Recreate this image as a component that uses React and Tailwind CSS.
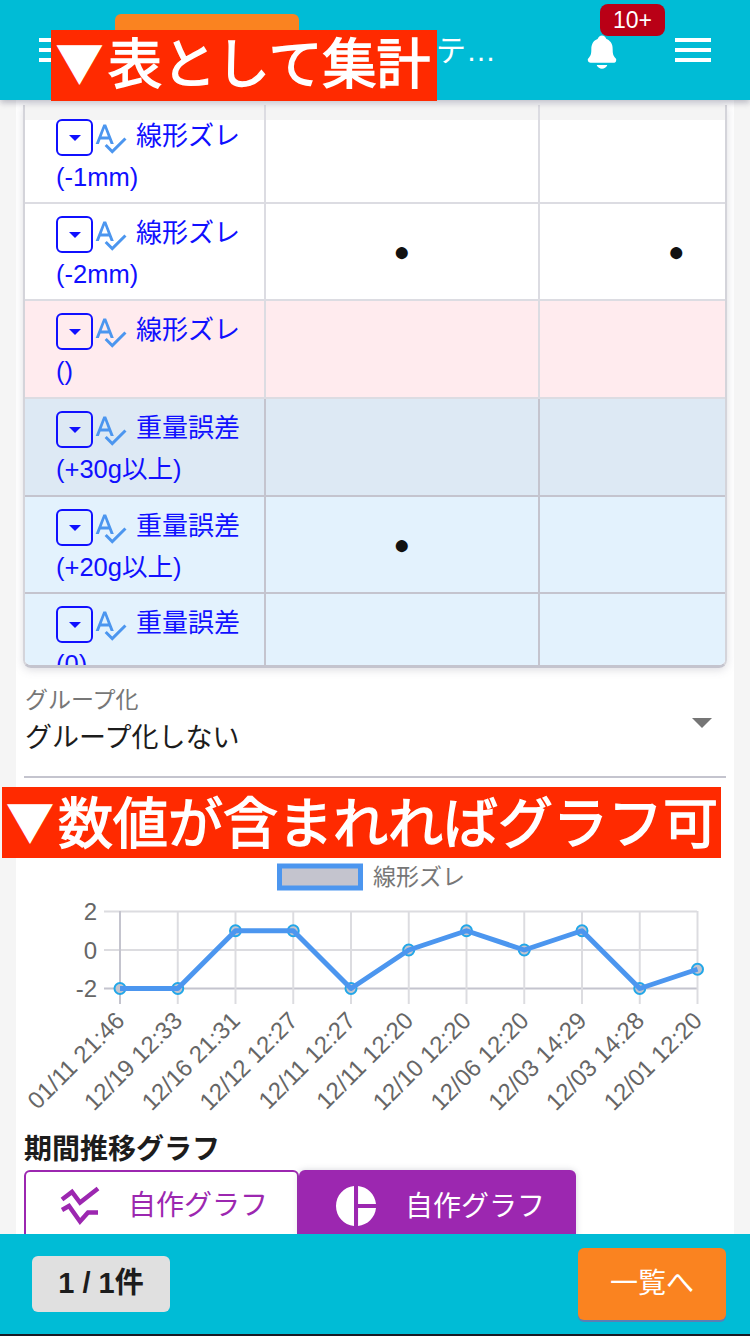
import React from 'react';
import { IoNotifications } from 'react-icons/io5';

const FONT = { fontFamily: '"Liberation Sans", "Noto Sans CJK JP", sans-serif' };
const BANNER_FONT = { fontFamily: '"Noto Sans CJK JP", sans-serif' };

const rows = [
  { name: '線形ズレ', sub: '(-1mm)', bg: 'bg-[linear-gradient(#f4f4f4_15px,#ffffff_15px)]', line: 'border-[#dcdce2]', h: 'h-[99px]', top: true },
  { name: '線形ズレ', sub: '(-2mm)', bg: 'bg-white', line: 'border-[#dcdce2]', h: 'h-[97px]', a: true, b: true },
  { name: '線形ズレ', sub: '()', bg: 'bg-[#ffebee]', line: 'border-[#dcdce2]', h: 'h-[98px]' },
  { name: '重量誤差', sub: '(+30g以上)', bg: 'bg-[#dde9f4]', line: 'border-[#c4c4ce]', h: 'h-[98px]' },
  { name: '重量誤差', sub: '(+20g以上)', bg: 'bg-[#e3f2fd]', line: 'border-[#c4c4ce]', h: 'h-[97px]', a: true },
  { name: '重量誤差', sub: '(0)', bg: 'bg-[#e3f2fd]', line: 'border-[#c4c4ce]', h: 'h-[98px]' },
];

const points = [-2, -2, 1, 1, -2, 0, 1, 0, 1, -2, -1];
const dates = ['01/11 21:46', '12/19 12:33', '12/16 21:31', '12/12 12:27', '12/11 12:27', '12/11 12:20', '12/10 12:20', '12/06 12:20', '12/03 14:29', '12/03 14:28', '12/01 12:20'];
const xAt = (i) => 96 + i * 57.75;
const yAt = (v) => 94 - v * 19.25;

function Burger() {
  return (
    <div className="flex flex-col gap-1.5 w-9">
      <div className="h-1 bg-white"></div>
      <div className="h-1 bg-white"></div>
      <div className="h-1 bg-white"></div>
    </div>
  );
}

function Row({ row }) {
  return (
    <div className={`flex ${row.h} ${row.bg} border-b-2 ${row.line} shrink-0`}>
      <div className={`w-[241px] shrink-0 pl-[31px] ${row.top ? 'pt-[14px]' : 'pt-[12px]'} text-[#1010ff] text-[26px] leading-[41px] border-r-2 ${row.line}`}>
        <div className="flex items-start">
          <div className="w-[37px] h-[37px] border-2 border-[#1010ff] rounded-md flex items-center justify-center shrink-0">
            <div className="border-x-[6px] border-x-transparent border-t-[6px] border-t-[#1010ff]"></div>
          </div>
          <svg viewBox="0 0 24 24" className="w-[36px] h-[36px] -ml-[1px] mt-[1px] shrink-0" fill="#4c96ef">
            <path d="M12.45 16h2.09L9.43 3H7.57L2.46 16h2.09l1.12-3h5.64l1.14 3zm-6.02-5L8.5 5.48 10.57 11H6.43zm15.16.59l-8.09 8.09L9.83 16l-1.41 1.41 5.09 5.09L23 13l-1.41-1.41z" />
          </svg>
          <span className="ml-[8px] -mt-[3px] whitespace-nowrap">{row.name}</span>
        </div>
        <div className="whitespace-nowrap text-[25.5px]">{row.sub}</div>
      </div>
      <div className={`w-[274px] shrink-0 flex items-center justify-center text-[28px] leading-none text-[#111] border-r-2 ${row.line}`}>{row.a ? '●' : ''}</div>
      <div className="w-[273px] shrink-0 flex items-center justify-center text-[28px] leading-none text-[#111]">{row.b ? '●' : ''}</div>
    </div>
  );
}

function Chart() {
  const line = points.map((v, i) => `${xAt(i)},${yAt(v)}`).join(' ');
  return (
    <svg width="702" height="272" className="block" style={FONT}>
      <rect x="255.5" y="10" width="81" height="22" fill="#c4c4ce" stroke="#4c96ef" strokeWidth="5" />
      <text x="349" y="29" fontSize="23" fill="#777">線形ズレ</text>
      {[0, 1, 2].map((i) => (
        <line key={i} x1="80" x2="673" y1={yAt(2 - i * 2)} y2={yAt(2 - i * 2)} stroke={i === 2 ? '#c4c4ce' : '#dcdce0'} strokeWidth="2" />
      ))}
      {points.map((v, i) => (
        <line key={i} x1={xAt(i)} x2={xAt(i)} y1="55" y2="148" stroke={i === 0 ? '#c4c4ce' : '#dcdce0'} strokeWidth="2" />
      ))}
      {[2, 0, -2].map((v) => (
        <text key={v} x="73" y={yAt(v) + 8.5} textAnchor="end" fontSize="24" fill="#666">{v}</text>
      ))}
      {points.map((v, i) => (
        <circle key={i} cx={xAt(i)} cy={yAt(v)} r="5.5" fill="#c4c4ce" stroke="#22a7e8" strokeWidth="2" />
      ))}
      <polyline points={line} fill="none" stroke="#4c96ef" strokeWidth="5" strokeLinejoin="round" />
      {dates.map((d, i) => (
        <text key={d + i} x={xAt(i) + 6} y="166" textAnchor="end" fontSize="24" fill="#666" transform={`rotate(-45 ${xAt(i) + 6} 166)`}>{d}</text>
      ))}
    </svg>
  );
}

export default function App() {
  return (
    <div className="relative flex flex-col h-[1336px] w-[750px] overflow-hidden bg-[#f5f5f5]" style={FONT}>
      <header className="relative z-10 h-[100px] shrink-0 bg-[#00bcd6] flex items-center pl-[39px] pr-[39px] text-white shadow-[0_3px_6px_rgba(120,120,140,0.45)]">
        <Burger />
        <div className="ml-10 w-[184px] h-[72px] bg-[#fa8320] rounded-md shrink-0"></div>
        <div className="ml-[17px] w-[190px] text-[30px] whitespace-nowrap overflow-hidden text-ellipsis">グラフのテスト集計</div>
        <div className="relative ml-auto mr-[54px] mt-[3px]">
          <IoNotifications className="w-[38px] h-[38px]" />
          <div className="absolute left-[17px] -top-[29px] w-[65px] h-[32px] bg-[#b90016] rounded-lg text-[23px] leading-[32px] text-center">10+</div>
        </div>
        <Burger />
      </header>

      <main className="flex-1 min-h-0 overflow-hidden mx-4 bg-white px-2">
        <div className="h-[563px] mt-[5px] overflow-hidden rounded-b-lg border-x-2 border-x-[#d4d4da] border-b-[3px] border-b-[#c4c4ce] -mx-px shadow-[0_2px_8px_rgba(120,120,140,0.25)] flex flex-col">
          {rows.map((row, i) => <Row key={i} row={row} />)}
        </div>

        <div className="relative h-[110px] pt-[18px] border-b-2 border-[#c4c4ce]">
          <div className="text-[23px] leading-[28px] text-[#777] pl-px">グループ化</div>
          <div className="text-[27px] leading-[48px] text-[#1c1c1c] pl-px">グループ化しない</div>
          <div className="absolute right-[14px] top-[50px] border-x-[10px] border-x-transparent border-t-[10px] border-t-[#757575]"></div>
        </div>

        <div className="pt-[78px]">
          <Chart />
        </div>

        <div className="mt-[4px] text-[28px] font-bold leading-[36px] text-[#1c1c1c]">期間推移グラフ</div>
        <div className="flex mt-[2px] text-[28px]">
          <div className="w-[275px] h-[80px] border-2 border-[#9c27b0] rounded-t-md bg-white text-[#9c27b0] flex items-start pt-[11px] pl-[32px]">
            <svg viewBox="0 0 44 44" className="w-[44px] h-[44px] shrink-0" fill="none" stroke="#9c27b0" strokeWidth="4.5">
              <polyline points="4,16.5 14,9 22,19.5 40,5.5" />
              <polyline points="4,27 11,23 22,38.5 30,29.5 40,29.5" />
            </svg>
            <span className="ml-[26px] mt-[3px] leading-[40px] whitespace-nowrap">自作グラフ</span>
          </div>
          <div className="w-[277px] h-[80px] bg-[#9c27b0] rounded-t-md text-white flex items-start pt-[12px] pl-[33px] shadow-[0_0_6px_rgba(120,120,140,0.3)]">
            <svg viewBox="0 0 24 24" className="w-[48px] h-[48px] shrink-0" fill="#fff">
              <path d="M11 2v20c-5.07-.5-9-4.79-9-10s3.93-9.5 9-10zm2.03 0v8.99H22c-.47-4.74-4.24-8.52-8.97-8.99zm0 11.01V22c4.74-.47 8.5-4.25 8.97-8.99h-8.97z" />
            </svg>
            <span className="ml-[25px] mt-[5px] leading-[40px] whitespace-nowrap">自作グラフ</span>
          </div>
        </div>
      </main>

      <footer className="relative z-10 h-[102px] shrink-0 bg-[#00bcd6] border-b-2 border-[#1a1a24] flex items-start justify-between pl-8 pr-6">
        <div className="mt-[22px] w-[138px] h-[56px] bg-[#e0e0e0] rounded-md text-[29px] font-bold text-[#1c1c1c] flex items-center justify-center">1 / 1件</div>
        <div className="mt-[14px] w-[148px] h-[72px] bg-[#fa8320] rounded-md text-[28px] text-white flex items-center justify-center shadow-[0_2px_0_#5b7fb5]">一覧へ</div>
      </footer>

      <div className="absolute z-20 left-[51px] top-[30px] h-[71px] w-[386px] flex items-center pb-[10px] bg-[#ff2a00] text-white text-[54px] leading-[61px] [-webkit-text-stroke:1.5px_white] whitespace-nowrap overflow-hidden" style={BANNER_FONT}>
        <span className="w-[57px] text-center text-[46px] shrink-0">▼</span>
        <span>表として集計</span>
      </div>
      <div className="absolute z-20 left-[2px] top-[787px] h-[71px] w-[719px] flex items-center pb-[6px] bg-[#ff2a00] text-white text-[55px] leading-[65px] [-webkit-text-stroke:1.5px_white] whitespace-nowrap overflow-hidden" style={BANNER_FONT}>
        <span className="w-[56px] text-center text-[46px] shrink-0">▼</span>
        <span>数値が含まれればグラフ可</span>
      </div>
    </div>
  );
}
